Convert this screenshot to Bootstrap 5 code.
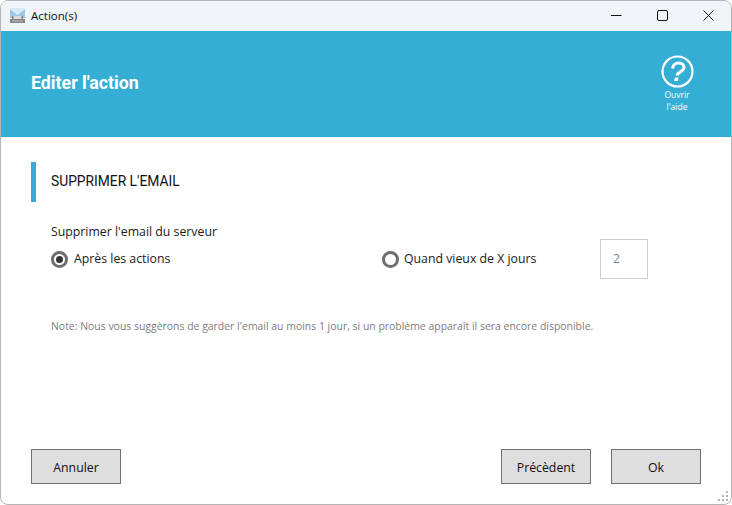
<!DOCTYPE html>
<html lang="fr"><head><meta charset="utf-8"><title>Action(s)</title>
<link href="https://cdn.jsdelivr.net/npm/bootstrap@5.3.0/dist/css/bootstrap.min.css" rel="stylesheet">
<style>
html,body{height:505px;overflow:hidden;background:#fff}
body{font-family:"Open Sans","Noto Sans",sans-serif;font-size:12px;color:#1a1a1a}
.win{width:732px;height:505px;border:1px solid #b4b4b4;border-radius:8px;overflow:hidden;background:#fff}
.tbar{height:30px;background:#eef4f8;padding-left:8px;flex:none}
.tbar-t{font-family:"Open Sans",sans-serif;font-size:11.5px;margin-left:5px;color:#111}
.wbtns svg{display:block}
.wb{width:46px;height:28px;margin-bottom:2px}
.hdr{height:106px;background:#35aed6;color:#fff;padding:0 29px 0 30px;flex:none}
.hdr-t{font-family:Roboto,sans-serif;font-weight:700;font-size:17.8px;padding-bottom:2px}
.help{width:50px;font-size:8.5px;line-height:11.5px;text-align:center;font-family:"Open Sans",sans-serif;margin-top:-1px}
.help svg{display:block;margin:0 auto 1px}
.main{padding:25px 30px 20px}
.sect{height:40px;border-left:5px solid #35aed6;padding:0 0 2px 15px;font-family:Roboto,sans-serif;font-size:13.8px;color:#111}
.lbl{margin:20px 0 0 20px;line-height:20px;font-size:12.3px}
.opts{margin-left:20px;height:40px;margin-top:-3px}
.opt-a{width:331px;font-size:12.3px}
.opt-b{width:218px;font-size:12.3px}
.rad{width:17px;height:17px;border:3px solid #6e6e6e;border-radius:50%;margin-right:6px;flex:none}
.opt-b .rad{margin-right:5px}
.rad-on::after{content:"";width:7px;height:7px;border-radius:50%;background:#333}
.numbox{width:48px;height:40px;border:1px solid #ccc;padding-left:12px;color:#6c86a8;font-size:12px}
.note{margin:37px 0 0 20px;font-size:10.45px;line-height:20px;color:#7d7d7d}
.acts{padding:0 30px 20px}
.btnrow{gap:20px}
.bt{width:90px;height:35px;background:#dedede;border:1px solid #707070;border-radius:0;font-size:12.3px;color:#111;padding:3px 0 0;font-family:"Open Sans",sans-serif}
.grip{right:2px;bottom:2px}
</style></head>
<body>
<div class="win d-flex flex-column position-relative">
  <div class="tbar d-flex align-items-center justify-content-between">
    <div class="d-flex align-items-center">
      <svg width="17" height="16" viewBox="0 0 17 16"><path d="M1 1l7.500 6L16 1v9H1z" fill="#9cc6e8"/><path d="M1 0h15L8.500 6.500z" fill="#d4e8f7"/><path d="M3 8h11v3h2v4H1v-4h2z" fill="#858585"/><rect x="4.500" y="8" width="8" height="3" fill="#dcdcdc"/><rect x="3" y="12.500" width="11" height="1" fill="#c4c4c4"/></svg>
      <span class="tbar-t">Action(s)</span>
    </div>
    <div class="wbtns d-flex">
      <div class="wb d-flex align-items-center justify-content-center"><svg width="11" height="11" viewBox="0 0 11 11"><path d="M0 5.500h10.500" stroke="#111" fill="none"/></svg></div>
      <div class="wb d-flex align-items-center justify-content-center"><svg width="11" height="11" viewBox="0 0 11 11"><rect x=".5" y=".5" width="10" height="10" rx="1.500" stroke="#111" fill="none"/></svg></div>
      <div class="wb d-flex align-items-center justify-content-center"><svg width="11" height="11" viewBox="0 0 11 11"><path d="M.5.5l10 10M10.500.5l-10 10" stroke="#111" fill="none"/></svg></div>
    </div>
  </div>
  <div class="hdr d-flex align-items-center justify-content-between">
    <div class="hdr-t">Editer l'action</div>
    <div class="help">
      <svg width="33" height="33" viewBox="0 0 33 33"><circle cx="16.500" cy="16.500" r="15" fill="none" stroke="#fff" stroke-width="2.200"/><path d="M11.500 13.500c.4-3.400 3-5.500 6-5.500 3.100 0 5.500 1.800 5.500 4.600 0 4.100-6 3.700-7 7.900" fill="none" stroke="#fff" stroke-width="3"/><path d="M14 22.500h3.600l-.8 3.500h-3.600z" fill="#fff"/></svg>
      Ouvrir<br>l'aide
    </div>
  </div>
  <div class="main flex-grow-1">
    <div class="sect d-flex align-items-center">SUPPRIMER L'EMAIL</div>
    <div class="lbl">Supprimer l'email du serveur</div>
    <div class="opts d-flex align-items-center">
      <div class="opt-a d-flex align-items-center"><span class="rad rad-on d-flex align-items-center justify-content-center"></span>Après les actions</div>
      <div class="opt-b d-flex align-items-center"><span class="rad"></span>Quand vieux de X jours</div>
      <div class="numbox d-flex align-items-center">2</div>
    </div>
    <div class="note">Note: Nous vous suggèrons de garder l'email au moins 1 jour, si un problème apparaît il sera encore disponible.</div>
  </div>
  <div class="acts d-flex justify-content-between">
    <button class="btn bt" type="button">Annuler</button>
    <div class="d-flex btnrow">
      <button class="btn bt" type="button">Précèdent</button>
      <button class="btn bt" type="button">Ok</button>
    </div>
  </div>
  <svg class="grip position-absolute" width="11" height="11" viewBox="0 0 11 11" fill="#b5b5b5"><rect x="8" y="0" width="2" height="2"/><rect x="8" y="4" width="2" height="2"/><rect x="4" y="4" width="2" height="2"/><rect x="8" y="8" width="2" height="2"/><rect x="4" y="8" width="2" height="2"/><rect x="0" y="8" width="2" height="2"/></svg>
</div>
</body></html>
